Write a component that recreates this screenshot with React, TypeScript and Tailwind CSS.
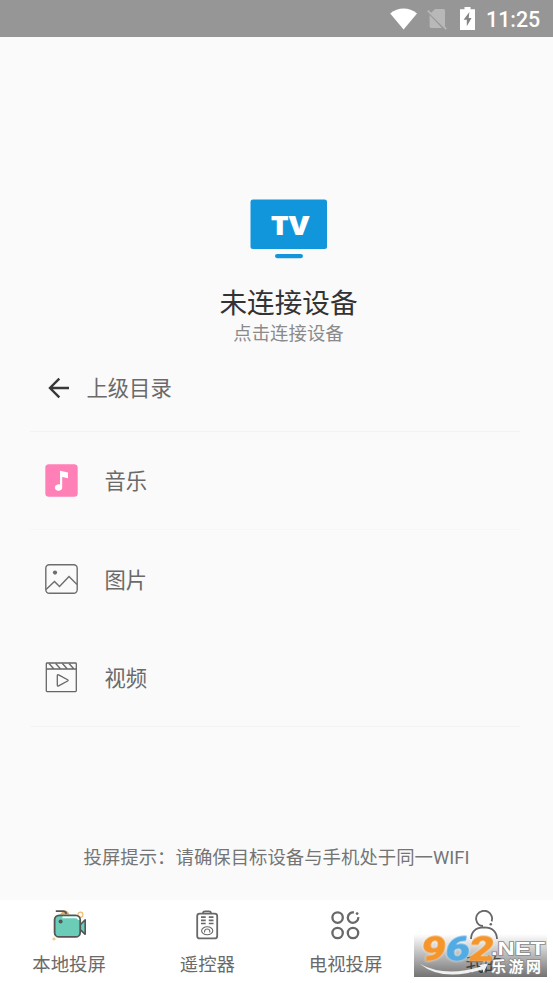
import type { ReactNode } from "react"

const StatusBar = () => (
  <header className="flex h-[37px] shrink-0 items-center justify-end bg-[#969696] pr-[12px] text-white">
    <svg width="28" height="22" viewBox="0 0 28 22" className="mr-[9px]">
      <path d="M0.2 5.6C8.2-1.2 19-1.2 27 5.6L13.6 21.4Z" fill="#fff" />
    </svg>
    <svg width="21" height="22" viewBox="0 0 21 22" className="mr-[12px]">
      <path d="M8 1h8.5q1.5 0 1.5 1.5V19L3.5 5.5Z M2.6 7L15 20H4q-1.4 0-1.4-1.4Z" fill="#b8b8b8" />
      <path d="M0.8 2.6L19.4 21.2" stroke="#b8b8b8" strokeWidth="1.8" />
    </svg>
    <svg width="15" height="23" viewBox="0 0 15 23" className="mr-[11px]">
      <path d="M4.5 0h6v2.2H15V23H0V2.2h4.5Z" fill="#fff" />
      <path d="M9.4 5L3.6 12.8h3.2v6.4L11.6 11H8.7Z" fill="#858585" />
    </svg>
    <span className="w-[55px] whitespace-nowrap pt-[2px] font-[Roboto] text-[21.4px] leading-[24px] font-medium">11:25</span>
  </header>
)

const TvIcon = () => (
  <svg width="78" height="60" viewBox="0 0 78 60">
    <rect x="0.5" y="0.5" width="76.5" height="49.5" rx="2.5" fill="#1296db" />
    <rect x="25" y="55" width="28" height="4.2" rx="2.1" fill="#1296db" />
    <text x="20.7" y="36" textLength="39" lengthAdjust="spacingAndGlyphs" fill="#fff" fontFamily="Open Sans" fontWeight="800" fontSize="27">
      TV
    </text>
  </svg>
)

const BackIcon = () => (
  <svg width="22" height="22" viewBox="0 0 22 22" fill="none" stroke="#383838" strokeWidth="2.4">
    <path d="M21 11H2M11.3 1.7L2 11l9.3 9.3" />
  </svg>
)

const MusicIcon = () => (
  <svg width="33" height="33" viewBox="0 0 33 33">
    <rect x="0.3" y="0.3" width="32.4" height="32.4" rx="3.5" fill="#ff80b7" />
    <path d="M15 6.8l8 1.7v5.8l-5.8-1.2v10.1a3.7 3.2 0 1 1-2.2-2.6Z" fill="#fff" />
  </svg>
)

const PictureIcon = () => (
  <svg width="33" height="31" viewBox="0 0 33 31" fill="none" stroke="#6d6d6d" strokeWidth="1.4">
    <rect x="0.8" y="1.8" width="31.4" height="28.4" rx="3.5" />
    <path d="M1 26.6L9.5 18.4l5 5.2L24 13.4l8 8" />
    <circle cx="10" cy="9.6" r="2.1" fill="#6d6d6d" stroke="none" />
  </svg>
)

const VideoIcon = () => (
  <svg width="33" height="31" viewBox="0 0 33 31" fill="none" stroke="#666" strokeWidth="1.3">
    <rect x="1.3" y="1" width="30" height="28.6" rx="0.8" />
    <path d="M1.3 7h30M4 1.5l4.5 5M10.7 1.5l4.5 5M17.4 1.5l4.5 5M24 1.5l4.5 5" />
    <path d="M12.3 13.7q0-1.4 1.3-.8l9 4.9q1 .6 0 1.2l-9 4.9q-1.3.6-1.3-.8Z" />
  </svg>
)

const CameraIcon = () => (
  <svg width="36" height="33" viewBox="0 0 36 33" fill="none" className="ml-[2px]">
    <path d="M8 5.4Q14-2.5 17.5 5.4Z" fill="#e9ad55" />
    <circle cx="28.4" cy="5.7" r="2.5" stroke="#efba6d" strokeWidth="1.2" />
    <path d="M0.3 30h3.4M2 28.3v3.4" stroke="#efba6d" strokeWidth="1" />
    <path d="M3.8 2.2h7.6q2 0 3 2.7" stroke="#555" strokeWidth="1.8" />
    <path d="M28 16l5.2-5.2v14.5L28 20.3Z" fill="#6bcdb8" stroke="#555" strokeWidth="1.6" strokeLinejoin="round" />
    <rect x="2.6" y="6.3" width="25.6" height="21.6" rx="4.5" fill="#6bcdb8" stroke="#555" strokeWidth="1.8" />
    <path d="M10.5 8.4h13.5q2.5.1 2.6 2.5" stroke="#fff" strokeWidth="1.6" />
    <circle cx="8.6" cy="12.4" r="2" fill="#555" />
  </svg>
)

const RemoteIcon = () => (
  <svg width="24" height="30" viewBox="0 0 24 30" fill="none" stroke="#686868" strokeWidth="1.8">
    <rect x="2.2" y="3.6" width="20" height="24.8" rx="2.5" />
    <path d="M8 3.6q0-2.3 2-2.3h4q2 0 2 2.3" />
    <path d="M6 7.1h4.7M6 10.3h4.7M6 13.5h4.7M13.8 7.1h4.7M13.8 10.3h4.7M13.8 13.5h4.7" strokeWidth="1.7" />
    <ellipse cx="12.2" cy="20.8" rx="5.6" ry="4" strokeWidth="1.1" />
    <path d="M9.6 22.4v-1.6q.3-1.8 2.6-1.8t2.6 1.8v1.6" strokeWidth="1.1" />
  </svg>
)

const CirclesIcon = () => (
  <svg width="29" height="29" viewBox="0 0 29 29" fill="none" stroke="#686868" strokeWidth="2.3">
    <circle cx="6.6" cy="6.6" r="5.2" />
    <circle cx="6.6" cy="22" r="5.2" />
    <circle cx="22" cy="22" r="5.2" />
    <path d="M22.9 1.5a5.2 5.2 0 1 0 4.3 4.6" />
    <circle cx="26.1" cy="2.6" r="1.4" fill="#686868" stroke="none" />
  </svg>
)

const PersonIcon = () => (
  <svg width="30" height="30" viewBox="0 0 30 30" fill="none" stroke="#686868" strokeWidth="1.8">
    <path d="M22.6 11.4A8 7.9 0 1 0 9.8 14.6q1.4 1.3 4.2 1.4" />
    <path d="M2 29q.6-11.4 13-11.6Q27.4 17.6 28 29" />
    <circle cx="21.8" cy="14.2" r="1.3" fill="#686868" stroke="none" />
  </svg>
)

const rows = [
  { label: "音乐", icon: <MusicIcon />, line: "border-[#f6f6f6]" },
  { label: "图片", icon: <PictureIcon />, line: "border-transparent" },
  { label: "视频", icon: <VideoIcon />, line: "border-[#f3f3f3]" },
]

const NavItem = ({ label, icon }: { label: string; icon: ReactNode }) => (
  <button className="flex flex-1 flex-col items-center">
    <span className="flex h-[50px] items-center justify-center">{icon}</span>
    <span className="mt-px text-[18.4px] leading-[27px] text-[#6a6a6a]">{label}</span>
  </button>
)

// Site mark laid over the corner of the tab bar
const SiteMark = () => (
  <div className="absolute right-[6px] bottom-[6px] h-[43px] w-[133px] bg-linear-to-b from-transparent to-black/55">
    <svg width="133" height="43" viewBox="0 0 133 43" className="overflow-visible">
      <path d="M6 30Q31 43.5 67 32.5l-2.5-1.5 9.5-1.5-4.5 9-1-3Q28 48 6 30Z" fill="#f0f0f0" />
      <g
        transform="translate(2 0.5) skewX(-8)"
        fontFamily="Roboto"
        fontWeight="700"
        fontSize="33.5"
        strokeWidth="1.3"
        strokeLinejoin="round"
        className="drop-shadow-[0_0_1px_#fff]"
      >
        <text x="8" y="26" textLength="24" lengthAdjust="spacingAndGlyphs" fill="#f5962c" stroke="#f5962c">9</text>
        <text x="32" y="26" textLength="24" lengthAdjust="spacingAndGlyphs" fill="#53abe3" stroke="#53abe3">6</text>
        <text x="56" y="26" textLength="24" lengthAdjust="spacingAndGlyphs" fill="#f5962c" stroke="#f5962c">2</text>
      </g>
      <g fontWeight="bold" fill="#fff" stroke="#888" strokeWidth="1.5" paintOrder="stroke">
        <text x="77" y="20.5" fontFamily="Liberation Sans" fontSize="18" textLength="54" lengthAdjust="spacingAndGlyphs">.NET</text>
        <text x="77" y="38" fontFamily="Noto Sans CJK SC" fontSize="15" textLength="50">乐游网</text>
      </g>
    </svg>
  </div>
)

export default function App() {
  return (
    <div className="relative flex h-[983px] w-[553px] flex-col overflow-hidden bg-[#fafafa] font-['Roboto','Noto_Sans_CJK_SC',sans-serif]">
      <StatusBar />
      <main className="flex flex-1 flex-col">
        <section className="flex flex-col items-center pt-[162px] pl-[24px]">
          <TvIcon />
          <h1 className="mt-[25px] text-[27.6px] leading-[40px] text-[#333]">未连接设备</h1>
          <p className="-mt-px text-[18.4px] leading-[22px] text-[#8a8a8a]">点击连接设备</p>
        </section>
        <section className="mr-[33px] ml-[30px] flex flex-col">
          <button className="flex h-[87px] items-center border-b border-[#f3f3f3] pl-[18px]">
            <BackIcon />
            <span className="ml-[16.5px] pt-[2px] text-[21.3px] leading-[30px] text-[#6a6a6a]">上级目录</span>
          </button>
          {rows.map((row) => (
            <button key={row.label} className={`flex h-[98.3px] items-center border-b pl-[15px] ${row.line}`}>
              {row.icon}
              <span className="ml-[26.5px] pt-[3.5px] text-[21.3px] leading-[30px] text-[#6a6a6a]">{row.label}</span>
            </button>
          ))}
        </section>
        <p className="mt-[117px] text-center text-[18.4px] leading-[27px] text-[#757575]">投屏提示：请确保目标设备与手机处于同一WIFI</p>
      </main>
      <nav className="flex h-[83px] shrink-0 bg-white">
        <NavItem label="本地投屏" icon={<CameraIcon />} />
        <NavItem label="遥控器" icon={<RemoteIcon />} />
        <NavItem label="电视投屏" icon={<CirclesIcon />} />
        <NavItem label="我的" icon={<PersonIcon />} />
      </nav>
      <SiteMark />
    </div>
  )
}
